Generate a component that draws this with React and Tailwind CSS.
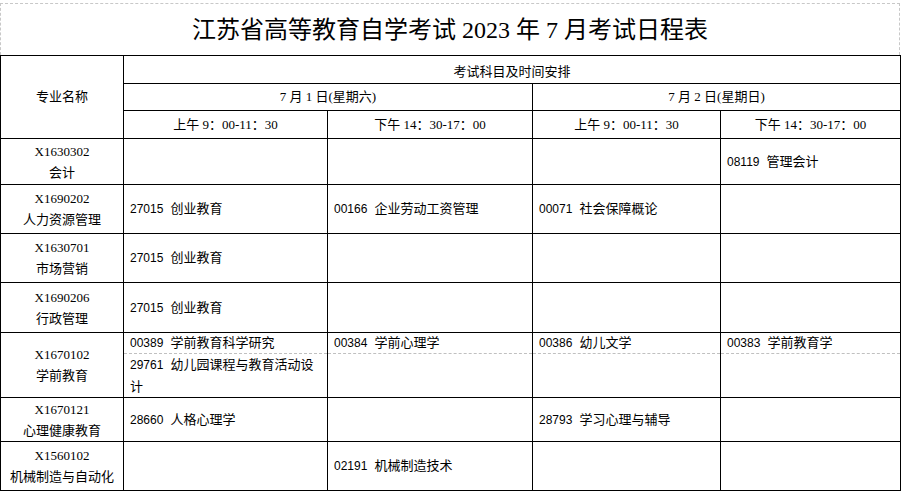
import React from "react";

const rows = [
  { code: "X1630302", name: "会计", h: "h-[46px]", cells: [null, null, null, ["08119", "管理会计"]] },
  { code: "X1690202", name: "人力资源管理", h: "h-[49px]", cells: [["27015", "创业教育"], ["00166", "企业劳动工资管理"], ["00071", "社会保障概论"], null] },
  { code: "X1630701", name: "市场营销", h: "h-[49px]", cells: [["27015", "创业教育"], null, null, null] },
  { code: "X1690206", name: "行政管理", h: "h-[50px]", cells: [["27015", "创业教育"], null, null, null] },
  {
    code: "X1670102",
    name: "学前教育",
    h: "h-[65px]",
    split: [
      [["00389", "学前教育科学研究"], ["29761", "幼儿园课程与教育活动设计"]],
      [["00384", "学前心理学"], null],
      [["00386", "幼儿文学"], null],
      [["00383", "学前教育学"], null],
    ],
  },
  { code: "X1670121", name: "心理健康教育", h: "h-[44px]", cells: [["28660", "人格心理学"], null, ["28793", "学习心理与辅导"], null] },
  { code: "X1560102", name: "机械制造与自动化", h: "h-[49px]", cells: [null, ["02191", "机械制造技术"], null, null] },
];

const Subject = ({ item }) =>
  item ? (
    <>
      <span className="font-['Liberation_Sans'] text-[12px] mr-[7px]">{item[0]}</span>
      {item[1]}
    </>
  ) : null;

const cell = "border border-black";

export default function App() {
  return (
    <div className="w-[902px] h-[491px] bg-white text-black text-[13px] font-['Liberation_Serif','Noto_Sans_CJK_SC',serif] pt-[3px]">
      {/* Title */}
      <div className="w-[900px] h-[52px] border-t border-x border-dashed border-[#c8c8c8] flex items-center justify-center text-[24px]">
        江苏省高等教育自学考试 2023 年 7 月考试日程表
      </div>

      <table className="w-[900px] table-fixed border-collapse">
        <colgroup>
          <col className="w-[123px]" />
          <col className="w-[204px]" />
          <col className="w-[205px]" />
          <col className="w-[188px]" />
          <col className="w-[180px]" />
        </colgroup>
        <thead>
          <tr className="h-[28px]">
            <td rowSpan={3} className={`${cell} text-center`}>专业名称</td>
            <td colSpan={4} className={`${cell} text-center pt-[4px]`}>考试科目及时间安排</td>
          </tr>
          <tr className="h-[27px]">
            <td colSpan={2} className={`${cell} text-center`}>7 月 1 日(星期六)</td>
            <td colSpan={2} className={`${cell} text-center`}>7 月 2 日(星期日)</td>
          </tr>
          <tr className="h-[28px]">
            <td className={`${cell} text-center`}>上午 9：00-11：30</td>
            <td className={`${cell} text-center`}>下午 14：30-17：00</td>
            <td className={`${cell} text-center`}>上午 9：00-11：30</td>
            <td className={`${cell} text-center`}>下午 14：30-17：00</td>
          </tr>
        </thead>
        <tbody>
          {rows.map((r) => (
            <tr key={r.code} className={r.h}>
              <td className={`${cell} text-center leading-[21px]`}>
                <div>{r.code}</div>
                <div>{r.name}</div>
              </td>
              {r.split
                ? r.split.map((pair, i) => (
                    <td key={i} className={`${cell} p-0 align-top`}>
                      <div className="flex flex-col">
                        <div className="h-[21px] flex items-center px-[6px] border-b border-dashed border-[#c0c0c0]">
                          <div><Subject item={pair[0]} /></div>
                        </div>
                        <div className="h-[43px] flex items-center px-[6px] leading-[21px]">
                          <div><Subject item={pair[1]} /></div>
                        </div>
                      </div>
                    </td>
                  ))
                : r.cells.map((c, i) => (
                    <td key={i} className={`${cell} px-[6px]`}>
                      <Subject item={c} />
                    </td>
                  ))}
            </tr>
          ))}
        </tbody>
      </table>
    </div>
  );
}
